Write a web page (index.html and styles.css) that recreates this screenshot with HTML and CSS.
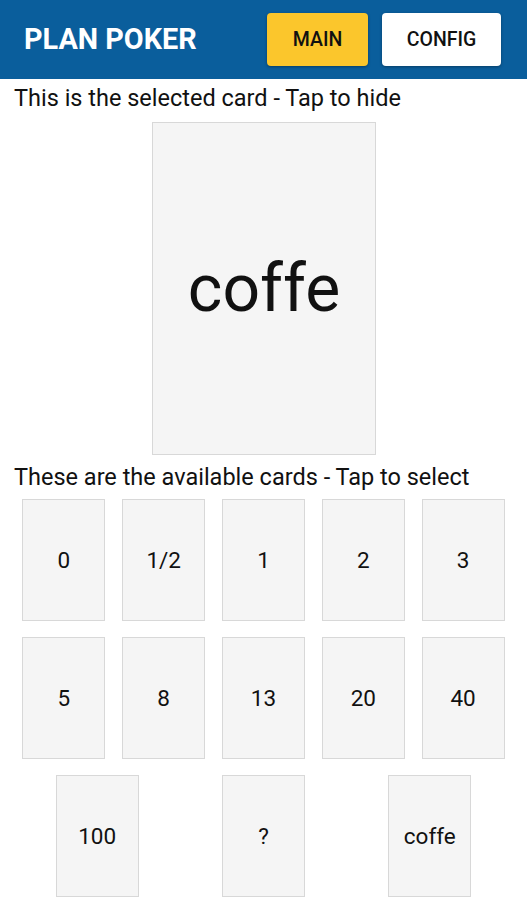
FILE: index.html
```html
<!DOCTYPE html>
<html>
<head>
<meta charset="utf-8">
<link rel="stylesheet" href="styles.css">
</head>
<body>
<header class="bar">
  <div class="title">PLAN POKER</div>
  <nav class="nav">
    <button class="btn btn-main">MAIN</button>
    <button class="btn btn-config">CONFIG</button>
  </nav>
</header>
<main class="content">
  <p class="label label-top">This is the selected card - Tap to hide</p>
  <div class="selected-wrap">
    <div class="card card-big">coffe</div>
  </div>
  <p class="label label-mid">These are the available cards - Tap to select</p>
  <div class="deck">
    <div class="card card-small">0</div>
    <div class="card card-small">1/2</div>
    <div class="card card-small">1</div>
    <div class="card card-small">2</div>
    <div class="card card-small">3</div>
    <div class="card card-small">5</div>
    <div class="card card-small">8</div>
    <div class="card card-small">13</div>
    <div class="card card-small">20</div>
    <div class="card card-small">40</div>
    <div class="card card-small">100</div>
    <div class="card card-small">?</div>
    <div class="card card-small">coffe</div>
  </div>
</main>
</body>
</html>
```

FILE: styles.css
```css
* { box-sizing: border-box; }
html, body { margin: 0; padding: 0; background: #fff; }
body {
  font-family: Roboto, "Noto Sans", "Liberation Sans", sans-serif;
  color: #111;
  width: 527px;
  height: 900px;
  overflow: hidden;
}
.bar {
  height: 79px;
  background: #0a5e9c;
  display: flex;
  align-items: center;
  justify-content: space-between;
  padding: 0 26px 0 24px;
}
.title {
  color: #fff;
  font-size: 28.8px;
  font-weight: 700;
  margin-top: -1px;
}
.nav { display: flex; gap: 14px; align-items: center; }
.btn {
  font-family: inherit;
  height: 53px;
  border: none;
  border-radius: 4px;
  font-size: 19.5px;
  font-weight: 500;
  color: #111;
  box-shadow: 0 1px 3px rgba(0,0,0,0.35);
  padding: 0;
}
.btn-main { width: 101px; background: #fbc62c; }
.btn-config { width: 119px; background: #fff; }
.content { padding: 0 14px; }
.label {
  margin: 0;
  font-size: 23.5px;
  line-height: 28px;
  color: #111;
}
.label-top { margin-top: 5px; }
.label-mid { margin-top: 8px; }
.selected-wrap {
  display: flex;
  justify-content: center;
  margin-top: 10px;
}
.card {
  background: #f5f5f5;
  border: 1px solid #d8d8d8;
  display: flex;
  align-items: center;
  justify-content: center;
  color: #111;
}
.card-big {
  width: 224px;
  height: 333px;
  font-size: 66px;
  margin-left: 1px;
}
.deck {
  display: flex;
  flex-wrap: wrap;
  justify-content: space-around;
}
.card-small {
  width: 83px;
  height: 122px;
  margin: 8px;
  font-size: 22.5px;
}
```
